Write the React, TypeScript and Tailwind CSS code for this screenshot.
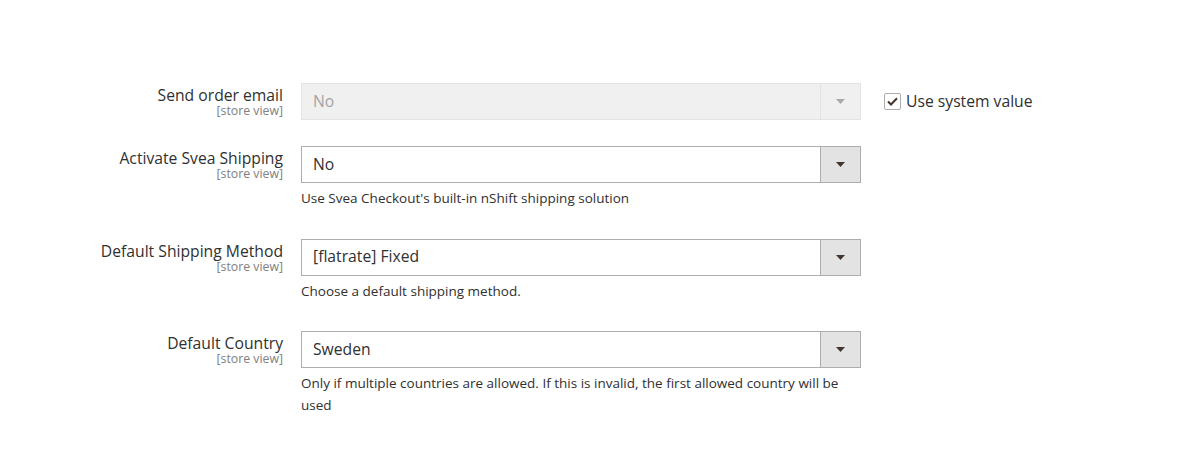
import React from "react";

const font = { fontFamily: '"Open Sans", "Noto Sans", sans-serif' };

function Arrow({ disabled }: { disabled?: boolean }) {
  return (
    <svg width="9" height="5" viewBox="0 0 9 5" className="block">
      <path d="M0 0 H9 L4.5 5 Z" fill={disabled ? "#a9a9a9" : "#41362f"} />
    </svg>
  );
}

function Select({ value, disabled }: { value: string; disabled?: boolean }) {
  return (
    <div
      className={
        "flex h-[37px] w-[560px] border " +
        (disabled ? "border-[#e3e3e3] bg-[#f0f0f0]" : "border-[#adadad] bg-white")
      }
    >
      <div
        className={
          "flex flex-1 items-center pl-[11px] text-[15.7px] " +
          (disabled ? "text-[#a3a3a3]" : "text-[#303030]")
        }
      >
        {value}
      </div>
      <div
        className={
          "flex w-[40px] items-center justify-center border-l " +
          (disabled ? "border-[#e3e3e3] bg-[#f0f0f0]" : "border-[#adadad] bg-[#e3e3e3]")
        }
      >
        <Arrow disabled={disabled} />
      </div>
    </div>
  );
}

function Row({
  label,
  value,
  note,
  disabled,
  extra,
  mb,
}: {
  label: string;
  value: string;
  note?: React.ReactNode;
  disabled?: boolean;
  extra?: React.ReactNode;
  mb: string;
}) {
  return (
    <div className={"flex " + mb}>
      <div className="w-[284px] pr-[1px] pt-[3px] text-right">
        <div className="text-[15.7px] leading-[18px] text-[#303030]">{label}</div>
        <div className="text-[12.3px] leading-[14px] text-[#808080]">[store view]</div>
      </div>
      <div className="ml-[17px] w-[560px]">
        <Select value={value} disabled={disabled} />
        {note && (
          <div className="mt-[5px] text-[13.5px] leading-[21.5px] text-[#303030]">{note}</div>
        )}
      </div>
      {extra}
    </div>
  );
}

export default function App() {
  return (
    <div className="min-h-[460px] w-[1177px] bg-white pt-[83px]" style={font}>
      <Row
        label="Send order email"
        value="No"
        disabled
        mb="mb-[26px]"
        extra={
          <div className="ml-[23px] flex h-[37px] items-center">
            <div className="flex h-[17px] w-[17px] items-center justify-center rounded-[2px] border border-[#adadad] bg-white">
              <svg width="11" height="9" viewBox="0 0 11 9">
                <path
                  d="M1 4.5 L4 7.5 L10 1.2"
                  fill="none"
                  stroke="#41362f"
                  strokeWidth="2"
                />
              </svg>
            </div>
            <span className="ml-[5px] text-[15.7px] text-[#303030]">Use system value</span>
          </div>
        }
      />
      <Row
        label="Activate Svea Shipping"
        value="No"
        note="Use Svea Checkout's built-in nShift shipping solution"
        mb="mb-[29px]"
      />
      <Row
        label="Default Shipping Method"
        value="[flatrate] Fixed"
        note="Choose a default shipping method."
        mb="mb-[29px]"
      />
      <Row
        label="Default Country"
        value="Sweden"
        note="Only if multiple countries are allowed. If this is invalid, the first allowed country will be used"
        mb="mb-0"
      />
    </div>
  );
}
